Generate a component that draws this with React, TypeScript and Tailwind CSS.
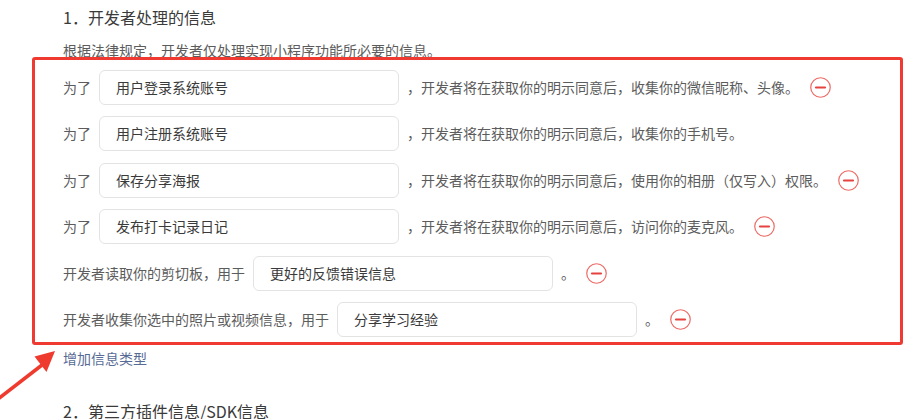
import React from "react";

type Row = { label: string; value: string; suffix: string; icon: boolean };

const rows: Row[] = [
  { label: "为了", value: "用户登录系统账号", suffix: "，开发者将在获取你的明示同意后，收集你的微信昵称、头像。", icon: true },
  { label: "为了", value: "用户注册系统账号", suffix: "，开发者将在获取你的明示同意后，收集你的手机号。", icon: false },
  { label: "为了", value: "保存分享海报", suffix: "，开发者将在获取你的明示同意后，使用你的相册（仅写入）权限。", icon: true },
  { label: "为了", value: "发布打卡记录日记", suffix: "，开发者将在获取你的明示同意后，访问你的麦克风。", icon: true },
  { label: "开发者读取你的剪切板，用于", value: "更好的反馈错误信息", suffix: "。", icon: true },
  { label: "开发者收集你选中的照片或视频信息，用于", value: "分享学习经验", suffix: "。", icon: true },
];

function MinusIcon() {
  return (
    <svg width="21" height="21" viewBox="0 0 21 21" className="ml-[11px] shrink-0">
      <circle cx="10.5" cy="10.5" r="9.75" fill="none" stroke="#ec6b66" strokeWidth="1.2" />
      <line x1="6" y1="10.5" x2="15" y2="10.5" stroke="#e64340" strokeWidth="2.2" strokeLinecap="round" />
    </svg>
  );
}

export default function App() {
  return (
    <div
      className="relative w-[917px] h-[419px] overflow-hidden bg-white"
      style={{ fontFamily: '"Noto Sans CJK SC", "Noto Sans", sans-serif' }}
    >
      <div className="pl-[63px] pt-[5px]">
        <div className="text-[16px] leading-[24px] text-[#3a3a3a]">1．开发者处理的信息</div>
        <div className="mt-[11px] text-[14px] leading-[20px] text-[#5c5c5c]">
          根据法律规定，开发者仅处理实现小程序功能所必要的信息。
        </div>
        <div className="mt-[10px] flex flex-col gap-[11.4px]">
          {rows.map((r, i) => (
            <div key={i} className="flex items-center h-[35px] text-[14px] text-[#5c5c5c]">
              <span className="whitespace-nowrap">{r.label}</span>
              <div className="ml-2 w-[300px] h-[35px] shrink-0 rounded-[6px] border border-[#e3e3e3] flex items-center pl-4 text-[#3a3a3a]">
                {r.value}
              </div>
              <span className="ml-2 whitespace-nowrap">{r.suffix}</span>
              {r.icon && <MinusIcon />}
            </div>
          ))}
        </div>
        <div className="mt-[11px] text-[14px] leading-[20px] text-[#576b95]">增加信息类型</div>
        <div className="mt-[31px] text-[16px] leading-[24px] text-[#3a3a3a]">2．第三方插件信息/SDK信息</div>
      </div>

      {/* annotation overlay */}
      <div className="absolute left-[32px] top-[57px] w-[871px] h-[288px] border-[3px] border-[#ee3a30] rounded-[3px] pointer-events-none" />
      <svg className="absolute left-0 top-[340px] pointer-events-none" width="70" height="70" viewBox="0 340 70 70">
        <line x1="-2" y1="399" x2="42" y2="365" stroke="#ef3a2e" strokeWidth="3.5" />
        <polygon points="55,351 34.5,356.5 46.5,372" fill="#ef3a2e" />
      </svg>
    </div>
  );
}
